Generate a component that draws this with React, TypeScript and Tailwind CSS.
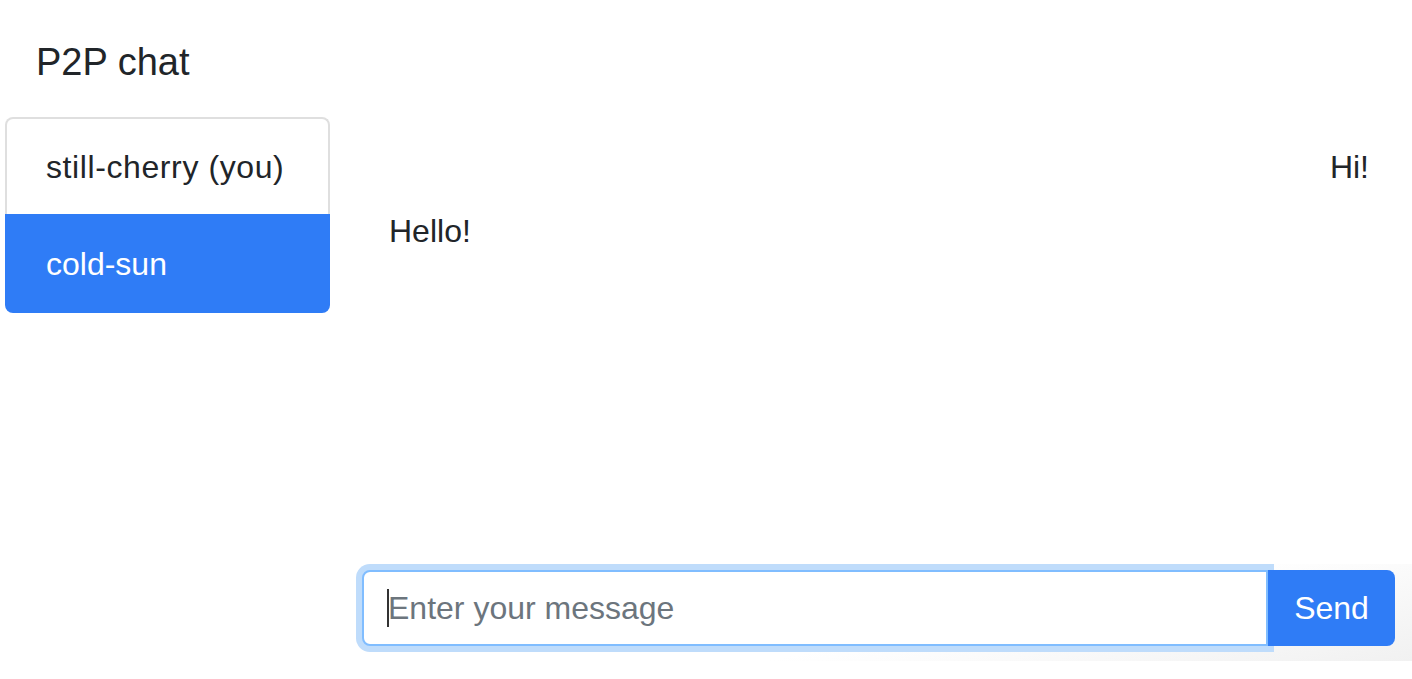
import React from 'react';

const peers = [
  { name: 'still-cherry (you)', active: false },
  { name: 'cold-sun', active: true },
];

const messages = [
  { text: 'Hi!', mine: true },
  { text: 'Hello!', mine: false },
];

export default function App() {
  return (
    <div className="w-[1412px] h-[679px] bg-white text-[#212529] overflow-hidden font-['Liberation_Sans',Arial,sans-serif]">
      {/* Title */}
      <h1 className="pl-[36px] pt-[39px] h-[117px] text-[38px] leading-[46px] font-normal">P2P chat</h1>

      <div className="flex h-[562px]">
        {/* Peer list */}
        <div className="ml-[5px] w-[325px] self-start">
          {peers.map((p) => (
            <div
              key={p.name}
              className={
                p.active
                  ? 'h-[99px] px-[41px] flex items-center bg-[#2f7cf6] text-white text-[32px] rounded-b-[8px]'
                  : 'h-[97px] px-[39px] flex items-center bg-white text-[32px] tracking-[0.6px] border-2 border-b-0 border-[#dfdfdf] rounded-t-[8px]'
              }
            >
              {p.name}
            </div>
          ))}
        </div>

        {/* Conversation */}
        <div className="flex-1 flex flex-col">
          <div className="flex-1 flex flex-col gap-[16px] pt-[26px] pl-[59px] pr-[43px]">
            {messages.map((m, i) => (
              <div key={i} className={m.mine ? 'text-right text-[32px] leading-[48px]' : 'text-left text-[32px] leading-[48px]'}>
                {m.text}
              </div>
            ))}
          </div>

          <div className="h-[97px] pt-[6px] pl-[32px] mb-[18px] bg-[linear-gradient(168deg,#ffffff_58%,#f1f1f1_100%)]">
            <div className="flex items-start">
              <div className="relative w-[906px]">
                <input
                  className="w-full h-[76px] border-2 border-[#80bdff] rounded-l-[8px] bg-white pl-[24px] text-[32px] text-[#495057] placeholder:text-[#6c757d] outline-none shadow-[0_0_0_6px_#bfdcfb]"
                  placeholder="Enter your message"
                />
                <span className="absolute left-[25px] top-[19px] w-[2px] h-[38px] bg-[#333]" />
              </div>
              <button className="w-[127px] h-[76px] rounded-r-[8px] bg-[#2f7cf6] text-white text-[32px] relative z-10">
                Send
              </button>
            </div>
          </div>
        </div>
      </div>
    </div>
  );
}
